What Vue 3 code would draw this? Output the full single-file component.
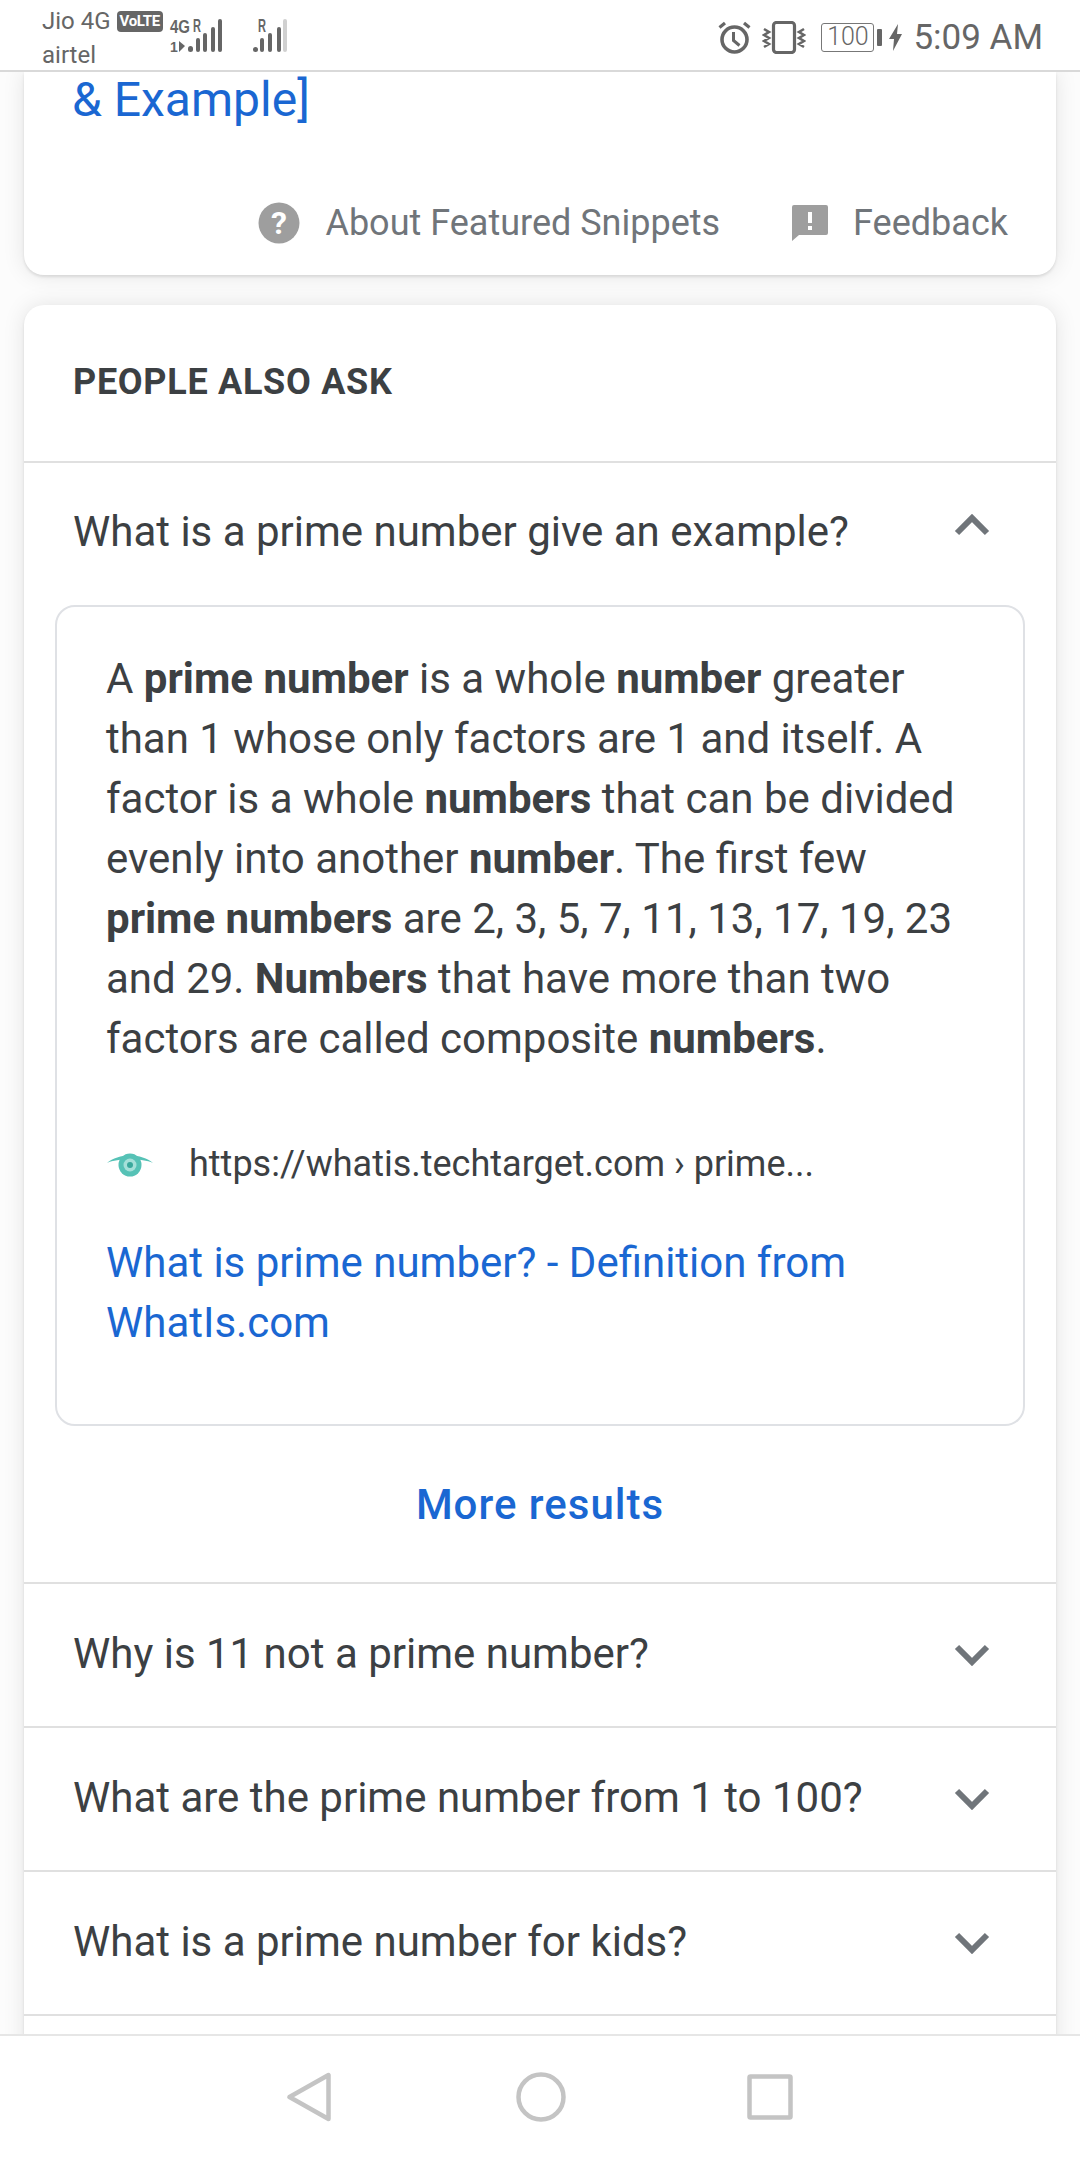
<script setup>
const questions = [
  'Why is 11 not a prime number?',
  'What are the prime number from 1 to 100?',
  'What is a prime number for kids?',
]
</script>

<template>
  <div class="phone">
    <header class="status">
      <div class="carriers">
        <div class="carrier-line">Jio 4G <span class="volte">VoLTE</span></div>
        <div class="carrier-line">airtel</div>
      </div>
      <svg class="signal-a" width="53" height="33" viewBox="0 0 53 33">
        <text x="0" y="14" class="sig-text" textLength="20" lengthAdjust="spacingAndGlyphs">4G</text>
        <text x="23" y="13" class="sig-text" textLength="8" lengthAdjust="spacingAndGlyphs">R</text>
        <text x="0" y="33" class="sig-text sig-small">1</text>
        <path d="M9 22l6 5-6 6z" fill="#666" />
        <rect x="18" y="27" width="5" height="6" rx="2.5" fill="#666" />
        <rect x="26" y="19" width="4" height="14" rx="2" fill="#666" />
        <rect x="33" y="14" width="4" height="19" rx="2" fill="#666" />
        <rect x="41" y="8" width="4" height="25" rx="2" fill="#666" />
        <rect x="48" y="0" width="4" height="33" rx="2" fill="#666" />
      </svg>
      <svg class="signal-b" width="35" height="33" viewBox="0 0 35 33">
        <text x="5" y="13" class="sig-text" textLength="8" lengthAdjust="spacingAndGlyphs">R</text>
        <rect x="0" y="28" width="5" height="5" rx="2.5" fill="#666" />
        <rect x="7" y="19" width="4" height="14" rx="2" fill="#666" />
        <rect x="15" y="14" width="4" height="19" rx="2" fill="#666" />
        <rect x="24" y="8" width="4" height="25" rx="2" fill="#666" />
        <rect x="30" y="0" width="4" height="33" rx="2" fill="#d0d0d0" />
      </svg>
      <div class="status-right">
        <svg width="33" height="33" viewBox="0 0 33 33" fill="none" stroke="#666" stroke-width="3.6">
          <circle cx="16.5" cy="18.5" r="12.5" />
          <path d="M15.5 11v8.5l6 5" stroke-width="3" />
          <path d="M1.5 6.5L7 2M31.5 6.5L26 2" stroke-width="3.2" />
        </svg>
        <svg class="vibrate" width="44" height="33" viewBox="0 0 44 33" fill="none" stroke="#666">
          <rect x="11.5" y="1.5" width="21" height="30" rx="3" stroke-width="3.2" />
          <path d="M2 8l5 3-5 3 5 3-5 3 5 3-5 3M42 8l-5 3 5 3-5 3 5 3-5 3 5 3" stroke-width="2.6" />
        </svg>
        <div class="battery">
          <span class="battery-box">100</span>
          <span class="battery-cap"></span>
        </div>
        <svg class="bolt" width="13" height="27" viewBox="0 0 13 27"><path d="M9 0L0 15h5l-1 12 9-17H8z" fill="#666" /></svg>
        <span class="time">5:09 AM</span>
      </div>
    </header>

    <main class="content">
      <section class="card card-top">
        <a class="top-link">&amp; Example]</a>
        <div class="snippet-foot">
          <svg width="42" height="42" viewBox="0 0 42 42">
            <circle cx="21" cy="21" r="20.5" fill="#9e9e9e" />
            <text x="21" y="32" text-anchor="middle" class="help-mark">?</text>
          </svg>
          <span class="foot-label foot-about">About Featured Snippets</span>
          <svg class="foot-flag" width="36" height="36" viewBox="0 0 36 36">
            <path d="M2 0h32a2 2 0 0 1 2 2v26a2 2 0 0 1-2 2H7l-7 6V2a2 2 0 0 1 2-2z" fill="#9e9e9e" />
            <rect x="16" y="7" width="4" height="11" fill="#fff" />
            <rect x="16" y="21" width="4" height="4" fill="#fff" />
          </svg>
          <span class="foot-label">Feedback</span>
        </div>
      </section>

      <section class="card card-paa">
        <h2 class="paa-title">PEOPLE ALSO ASK</h2>

        <div class="row row-open">
          <span>What is a prime number give an example?</span>
          <svg class="chev chev-up" width="36" height="22" viewBox="0 0 36 22"><path d="M3 19L18 4l15 15" /></svg>
        </div>

        <div class="answer">
          <p class="answer-text">A <b>prime number</b> is a whole <b>number</b> greater than 1 whose only factors are 1 and itself. A factor is a whole <b>numbers</b> that can be divided evenly into another <b>number</b>. The first few <b>prime numbers</b> are 2, 3, 5, 7, 11, 13, 17, 19, 23 and 29. <b>Numbers</b> that have more than two factors are called composite <b>numbers</b>.</p>
          <div class="source">
            <svg width="48" height="26" viewBox="0 0 48 26">
              <path d="M1 12C12 2 36 2 47 12C36 7 12 7 1 12z" fill="#56c2b6" />
              <circle cx="24" cy="14" r="11.5" fill="#56c2b6" />
              <circle cx="24" cy="14" r="6.5" fill="#a5e0d9" />
              <circle cx="24" cy="14" r="3" fill="#3aa89c" />
            </svg>
            <span class="source-url">https://whatis.techtarget.com › prime...</span>
          </div>
          <a class="answer-link">What is prime number? - Definition from WhatIs.com</a>
        </div>

        <div class="more">More results</div>

        <div v-for="q in questions" :key="q" class="row row-closed">
          <span>{{ q }}</span>
          <svg class="chev" width="36" height="22" viewBox="0 0 36 22"><path d="M3 3l15 15L33 3" /></svg>
        </div>
        <div class="row-edge"></div>
      </section>
    </main>

    <nav class="navbar">
      <svg width="44" height="50" viewBox="0 0 44 50" fill="none" stroke="#c4c4c4" stroke-width="4.5" stroke-linejoin="round">
        <path d="M41.5 3v44L2.5 25z" />
      </svg>
      <svg class="nav-home" width="50" height="50" viewBox="0 0 50 50" fill="none" stroke="#c4c4c4" stroke-width="4.5">
        <circle cx="25" cy="25" r="22.5" />
      </svg>
      <svg width="46" height="46" viewBox="0 0 46 46" fill="none" stroke="#c4c4c4" stroke-width="4.5" stroke-linejoin="round">
        <rect x="2.5" y="2.5" width="41" height="41" rx="1" />
      </svg>
    </nav>
  </div>
</template>

<style scoped>
.phone {
  width: 1080px;
  height: 2160px;
  display: flex;
  flex-direction: column;
  overflow: hidden;
  background: #fff;
  font-family: Roboto, "Liberation Sans", sans-serif;
  color: #3c4043;
}

/* ステータスバー */
.status {
  position: relative;
  z-index: 1;
  height: 72px;
  flex: none;
  box-sizing: border-box;
  display: flex;
  padding: 4px 37px 0 42px;
  background: #fff;
  border-bottom: 2px solid #d9d9d9;
  color: #666;
}
.carriers {
  width: 128px;
  font-size: 24px;
  line-height: 34px;
  white-space: nowrap;
}
.carrier-line {
  display: flex;
  align-items: center;
  gap: 6px;
}
.volte {
  background: #666;
  color: #fff;
  font-size: 15px;
  font-weight: 700;
  line-height: 21px;
  height: 21px;
  padding: 0 3px;
  border-radius: 4px;
  letter-spacing: -0.4px;
}
.signal-a {
  margin-top: 15px;
  overflow: visible;
}
.signal-b {
  margin: 15px 0 0 30px;
  overflow: visible;
}
.sig-text {
  font-family: "Liberation Sans", sans-serif;
  font-size: 19px;
  font-weight: 700;
  fill: #666;
}
.sig-small {
  font-size: 14px;
}
.status-right {
  margin-left: auto;
  display: flex;
  align-items: center;
  height: 66px;
}
.vibrate {
  margin-left: 11px;
}
.battery {
  display: flex;
  align-items: center;
  margin-left: 15px;
}
.battery-box {
  box-sizing: border-box;
  width: 53px;
  height: 29px;
  border: 1.5px solid #777;
  border-radius: 3px;
  font-size: 25px;
  line-height: 26px;
  text-align: center;
  font-weight: 300;
}
.battery-cap {
  width: 5px;
  height: 17px;
  background: #666;
  margin-left: 3px;
  border-radius: 1px;
}
.bolt {
  margin-left: 7px;
}
.time {
  margin-left: 11px;
  font-size: 35px;
  white-space: nowrap;
}

/* 本文 */
.content {
  flex: 1;
  min-height: 0;
  overflow: hidden;
  background: #fcfcfc;
  padding: 0 24px;
}
.card {
  background: #fff;
  box-shadow: 0 2px 3px rgba(0, 0, 0, 0.1), 0 0 22px rgba(0, 0, 0, 0.1);
}
.card-top {
  height: 203px;
  border-radius: 0 0 20px 20px;
  padding: 0 48px;
  box-sizing: border-box;
}
.top-link {
  display: block;
  color: #1a67d2;
  font-size: 48px;
  line-height: 56px;
}
.snippet-foot {
  display: flex;
  align-items: center;
  margin-top: 73px;
  justify-content: flex-end;
}
.foot-label {
  font-size: 36px;
  line-height: 44px;
  color: #70757a;
  white-space: nowrap;
}
.foot-about {
  margin-left: 25px;
}
.foot-flag {
  margin: 0 25px 0 72px;
}
.card-paa {
  margin-top: 30px;
  border-radius: 20px 20px 0 0;
  height: 1760px;
}
.paa-title {
  margin: 0;
  height: 158px;
  box-sizing: border-box;
  padding: 55px 49px 0;
  font-size: 36px;
  line-height: 44px;
  font-weight: 700;
  letter-spacing: 0.7px;
  color: #3c4043;
  border-bottom: 2px solid #e0e0e0;
}
.row {
  display: flex;
  align-items: center;
  justify-content: space-between;
  box-sizing: border-box;
  padding: 0 66px 0 49px;
  font-size: 42px;
  color: #3c4043;
}
.row span {
  margin-bottom: 4px;
}
.row-open {
  height: 142px;
}
.row-open span {
  margin-bottom: 6px;
}
.row-closed {
  height: 144px;
  border-top: 2px solid #e0e0e0;
}
.row-edge {
  border-top: 2px solid #e0e0e0;
}
.chev {
  fill: none;
  stroke: #70757a;
  stroke-width: 6;
}
.chev-up {
  margin-top: -19px;
}
.answer {
  margin: 0 31px;
  box-sizing: border-box;
  height: 821px;
  border: 2px solid #dfe1e5;
  border-radius: 20px;
  padding: 42px 49px 0 49px;
}
.answer-text {
  margin: 0;
  font-size: 42px;
  line-height: 60px;
  color: #3c4043;
}
.answer-text b {
  font-weight: 700;
}
.source {
  display: flex;
  align-items: center;
  margin-top: 73px;
  height: 44px;
}
.source svg {
  margin-right: 35px;
}
.source-url {
  font-size: 36px;
  color: #3c4043;
  white-space: nowrap;
}
.answer-link {
  display: block;
  margin-top: 47px;
  font-size: 42px;
  line-height: 60px;
  color: #1a67d2;
}
.more {
  height: 156px;
  display: flex;
  align-items: center;
  justify-content: center;
  color: #1a67d2;
  font-size: 42px;
  font-weight: 500;
  letter-spacing: 1px;
}

/* ナビゲーションバー */
.navbar {
  position: relative;
  height: 126px;
  flex: none;
  box-sizing: border-box;
  display: flex;
  align-items: center;
  justify-content: center;
  padding-bottom: 3px;
  background: #fff;
  border-top: 2px solid #e6e6e6;
}
.nav-home {
  margin: 0 181px 0 185px;
}
</style>

<style>
html, body { margin: 0; background: #fff; }
.help-mark {
  font-family: Roboto, "Liberation Sans", sans-serif;
  font-size: 32px;
  font-weight: 700;
  fill: #fff;
}
</style>
